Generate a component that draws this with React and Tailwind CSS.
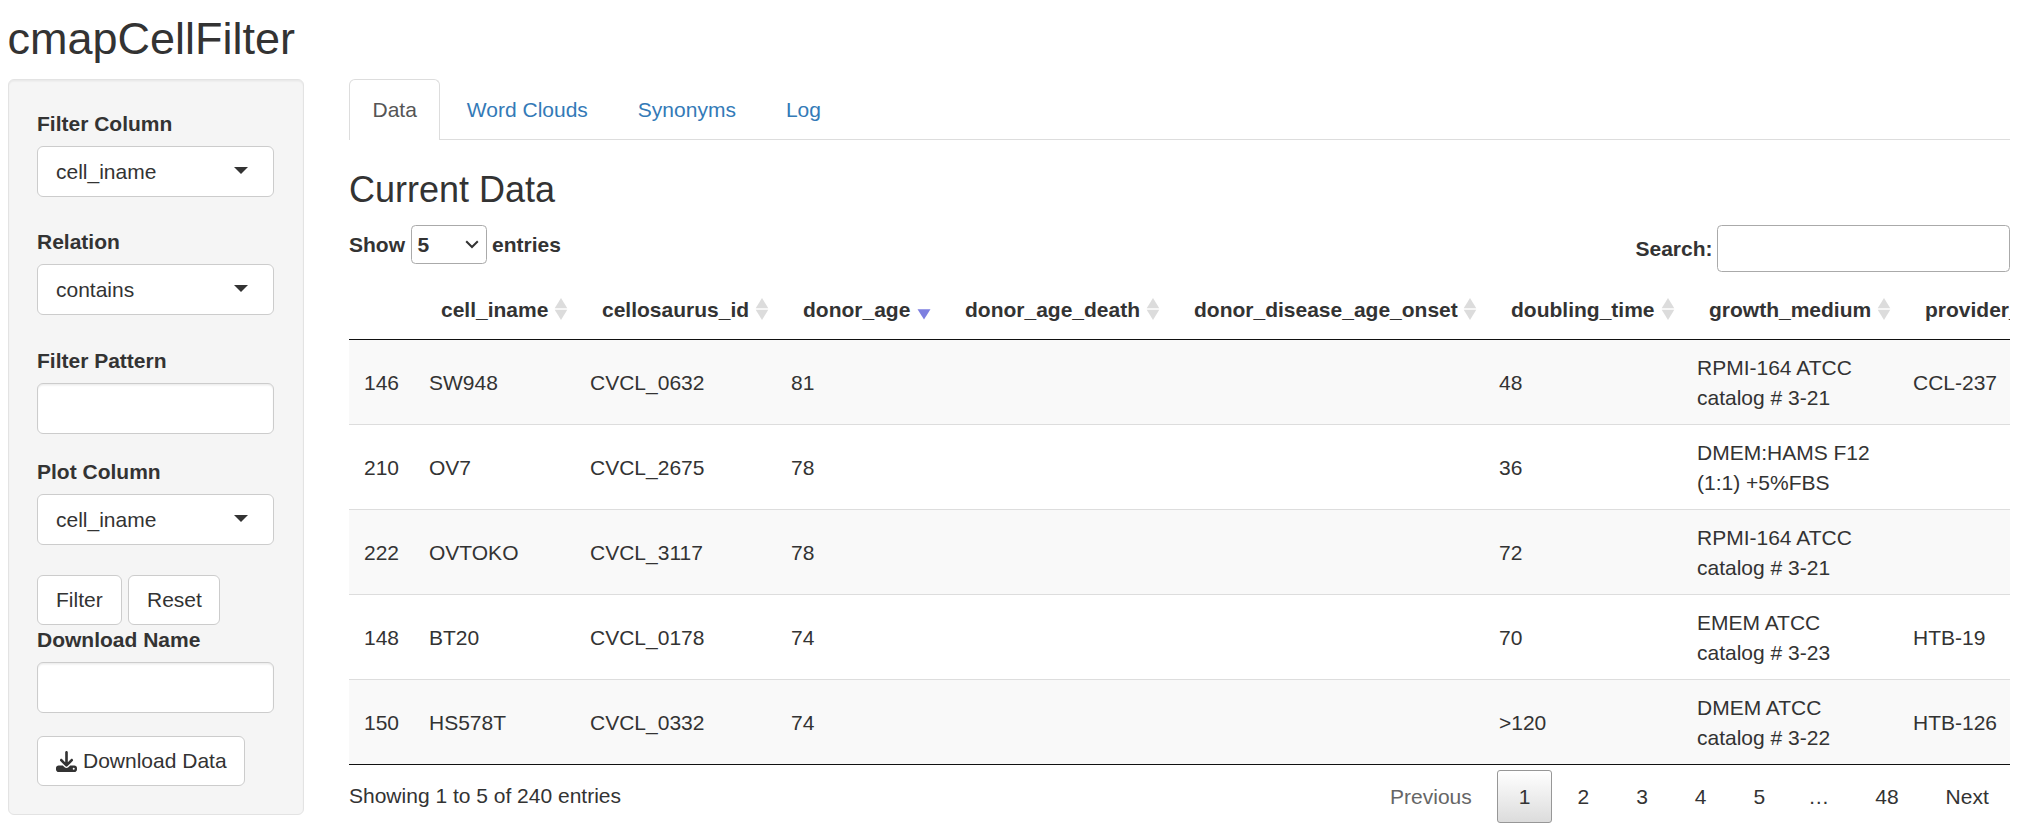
import React from "react";

const columns = [
  { name: "", width: 65 },
  { name: "cell_iname", width: 161 },
  { name: "cellosaurus_id", width: 201 },
  { name: "donor_age", width: 162, sorted: true },
  { name: "donor_age_death", width: 229 },
  { name: "donor_disease_age_onset", width: 317 },
  { name: "doubling_time", width: 198 },
  { name: "growth_medium", width: 216 },
  { name: "provider_", width: 199 },
];

const rows = [
  ["146", "SW948", "CVCL_0632", "81", "", "", "48", ["RPMI-164 ATCC", "catalog # 3-21"], "CCL-237"],
  ["210", "OV7", "CVCL_2675", "78", "", "", "36", ["DMEM:HAMS F12", "(1:1) +5%FBS"], ""],
  ["222", "OVTOKO", "CVCL_3117", "78", "", "", "72", ["RPMI-164 ATCC", "catalog # 3-21"], ""],
  ["148", "BT20", "CVCL_0178", "74", "", "", "70", ["EMEM ATCC", "catalog # 3-23"], "HTB-19"],
  ["150", "HS578T", "CVCL_0332", "74", "", "", ">120", ["DMEM ATCC", "catalog # 3-22"], "HTB-126"],
];

function SortIcon({ sorted }) {
  return (
    <svg className="absolute right-[7px] top-[19px]" width="14" height="22" viewBox="0 0 14 22">
      {sorted ? (
        <path d="M0.5 11.3h13L7 21.5z" fill="#7d7fe0" />
      ) : (
        <>
          <path d="M7 0l6.3 10.300H0.700z" fill="#dcdcdc" />
          <path d="M0.700 11.700h12.600L7 22z" fill="#dcdcdc" />
        </>
      )}
    </svg>
  );
}

function Label({ children }) {
  return <label className="mb-[7px] block h-[30px] font-bold">{children}</label>;
}

function Select({ value }) {
  return (
    <div className="flex h-[51px] items-center justify-between rounded-[6px] border border-[#cccccc] bg-white pl-[18px] pr-[25px]">
      <span>{value}</span>
      <svg width="14" height="7" viewBox="0 0 14 7" className="mb-[2px]">
        <path d="M0 0h14L7 7z" fill="#333333" />
      </svg>
    </div>
  );
}

function TextInput() {
  return (
    <input
      type="text"
      className="block h-[51px] w-full rounded-[6px] border border-[#cccccc] bg-white px-[18px] shadow-[inset_0_1.5px_1.5px_rgba(0,0,0,0.075)] outline-none"
    />
  );
}

function Button({ children, className = "" }) {
  return (
    <button
      type="button"
      className={"flex h-[50px] items-center rounded-[6px] border border-[#cccccc] bg-white px-[18px] " + className}
    >
      {children}
    </button>
  );
}

function Sidebar() {
  return (
    <aside className="mt-[79px] h-[736px] w-[296px] shrink-0 rounded-[6px] border border-[#e3e3e3] bg-[#f5f5f5] pl-[28px] pr-[29px] pt-[29px] shadow-[inset_0_1.5px_1.5px_rgba(0,0,0,0.05)]">
      <Label>Filter Column</Label>
      <Select value="cell_iname" />
      <div className="h-[30px]" />
      <Label>Relation</Label>
      <Select value="contains" />
      <div className="h-[31px]" />
      <Label>Filter Pattern</Label>
      <TextInput />
      <div className="h-[23px]" />
      <Label>Plot Column</Label>
      <Select value="cell_iname" />
      <div className="mt-[30px] flex gap-[6px]">
        <Button className="w-[85px]">Filter</Button>
        <Button className="w-[92px]">Reset</Button>
      </div>
      <Label>Download Name</Label>
      <TextInput />
      <Button className="mt-[23px] w-[208px] gap-[6px] whitespace-nowrap">
        <svg width="21" height="21" viewBox="0 0 512 512" fill="#333333" className="shrink-0">
          <path d="M288 32c0-17.700-14.300-32-32-32s-32 14.300-32 32V274.700l-73.400-73.400c-12.500-12.500-32.800-12.500-45.300 0s-12.500 32.800 0 45.300l128 128c12.500 12.500 32.800 12.500 45.300 0l128-128c12.500-12.500 12.500-32.800 0-45.300s-32.800-12.500-45.300 0L288 274.700V32zM64 352c-35.300 0-64 28.700-64 64v32c0 35.300 28.700 64 64 64H448c35.300 0 64-28.700 64-64V416c0-35.300-28.700-64-64-64H346.500l-45.300 45.300c-25 25-65.500 25-90.500 0L165.500 352H64zm368 56a24 24 0 1 1 0 48 24 24 0 1 1 0-48z" />
        </svg>
        Download Data
      </Button>
    </aside>
  );
}

function Tabs() {
  return (
    <nav className="flex h-[61px] gap-[3px] border-b border-[#dddddd]">
      <a className="-mb-px h-[61px] rounded-t-[6px] border border-b-0 border-[#dddddd] bg-white px-[22.5px] pt-[15px] text-[#555555]">
        Data
      </a>
      <a className="px-[23.5px] pt-[16px] text-[#337ab7]">Word Clouds</a>
      <a className="px-[23.5px] pt-[16px] text-[#337ab7]">Synonyms</a>
      <a className="px-[23.5px] pt-[16px] text-[#337ab7]">Log</a>
    </nav>
  );
}

function DataTable() {
  return (
    <div className="w-full overflow-hidden">
      <table className="w-[1748px] table-fixed border-separate border-spacing-0">
        <colgroup>
          {columns.map((c, i) => (
            <col key={i} style={{ width: c.width }} />
          ))}
        </colgroup>
        <thead>
          <tr>
            {columns.map((c, i) => (
              <th
                key={i}
                className="relative h-[61px] whitespace-nowrap border-b border-[#111111] px-[27px] pt-[16px] text-left align-top font-bold"
              >
                {c.name}
                {c.name && <SortIcon sorted={c.sorted} />}
              </th>
            ))}
          </tr>
        </thead>
        <tbody>
          {rows.map((row, r) => (
            <tr key={row[0]} className={r % 2 === 0 ? "bg-[#f9f9f9]" : "bg-white"}>
              {row.map((cell, i) => (
                <td
                  key={i}
                  className={
                    "h-[85px] whitespace-nowrap border-b px-[15px] pb-[11px] pt-[13px] " +
                    (r === rows.length - 1 ? "border-[#111111]" : "border-[#dddddd]")
                  }
                >
                  {Array.isArray(cell) ? cell.map((line) => <div key={line}>{line}</div>) : cell}
                </td>
              ))}
            </tr>
          ))}
        </tbody>
      </table>
    </div>
  );
}

function PageButton({ children, className = "border-transparent" }) {
  return (
    <a className={"box-border h-[53px] rounded-[3px] border px-[21px] pt-[10.5px] " + className}>{children}</a>
  );
}

function Footer() {
  return (
    <div className="flex justify-between">
      <div className="pt-[16px]">Showing 1 to 5 of 240 entries</div>
      <div className="-mr-[0.75px] mt-[5px] flex gap-[3px]">
        <PageButton className="border-transparent text-[#666666]">Previous</PageButton>
        <PageButton className="border-[#979797] bg-linear-to-b from-white to-[#dcdcdc]">1</PageButton>
        <PageButton>2</PageButton>
        <PageButton>3</PageButton>
        <PageButton>4</PageButton>
        <PageButton>5</PageButton>
        <span className="-ml-[3px] px-[21px] pt-[11.5px]">…</span>
        <PageButton>48</PageButton>
        <PageButton>Next</PageButton>
      </div>
    </div>
  );
}

export default function App() {
  return (
    <div className="h-[835px] w-[2021px] overflow-hidden bg-white pl-[8px] font-['Liberation_Sans',Arial,sans-serif] text-[21px] leading-[30px] text-[#333333]">
      <h2 className="-mb-[79px] -ml-[0.5px] h-[79px] pt-[14px] text-[45px] font-medium leading-[50px]">cmapCellFilter</h2>
      <div className="flex">
        <Sidebar />
        <main className="ml-[45px] mt-[79px] w-[1661px]">
          <Tabs />
          <h3 className="mt-[30px] h-[40px] text-[36px] font-medium leading-[40px]">Current Data</h3>
          <div className="mt-[15px] flex h-[54px] items-start justify-between font-bold">
            <div className="flex items-center gap-[5.5px]">
              <span>Show</span>
              <div className="flex h-[39px] w-[76px] items-center justify-between rounded-[4.5px] border border-[#aaaaaa] bg-white pl-[6px] pr-[7px]">
                <span>5</span>
                <svg width="14" height="9" viewBox="0 0 14 9" fill="none">
                  <path d="M1.200 1.200L7 7l5.800-5.800" stroke="#333333" strokeWidth="2" />
                </svg>
              </div>
              <span>entries</span>
            </div>
            <div className="flex items-center gap-[4.5px]">
              <span>Search:</span>
              <input
                type="text"
                className="h-[47px] w-[293px] rounded-[4.5px] border border-[#aaaaaa] bg-white outline-none"
              />
            </div>
          </div>
          <DataTable />
          <Footer />
        </main>
      </div>
    </div>
  );
}
